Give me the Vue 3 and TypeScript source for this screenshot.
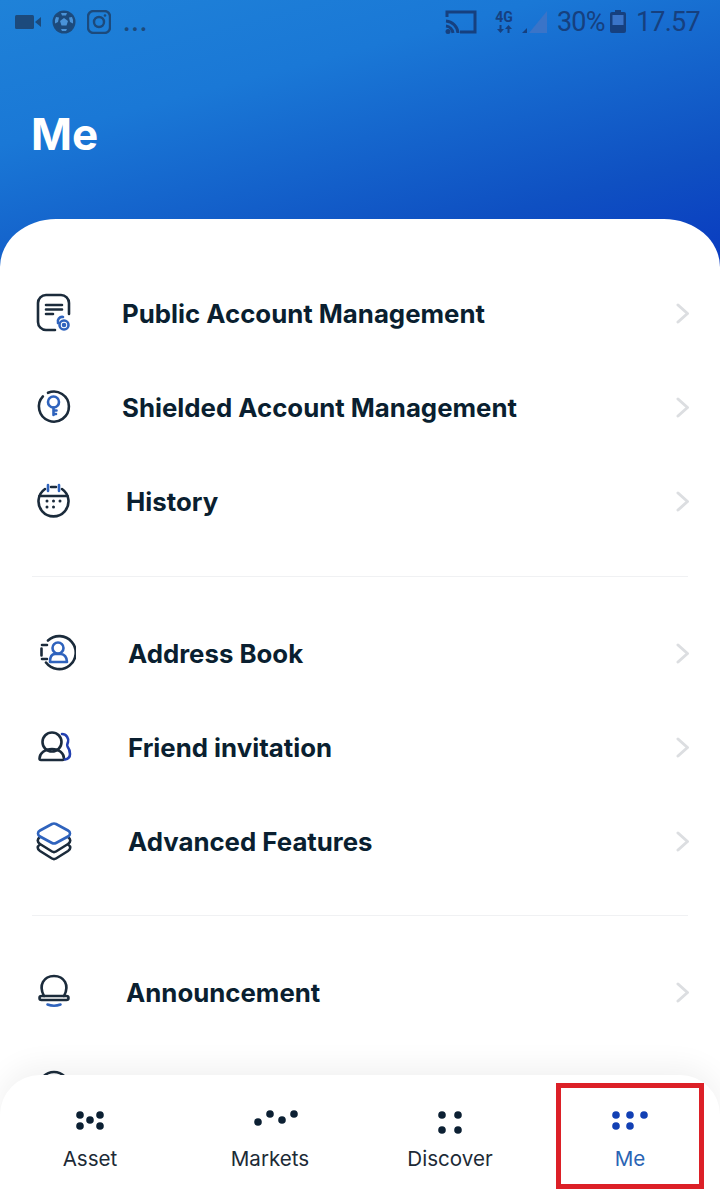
<script setup lang="ts">
interface MenuRow {
  label: string
  icon: string
  textLeft: number
}

const groups: MenuRow[][] = [
  [
    { label: 'Public Account Management', icon: 'doc', textLeft: 122 },
    { label: 'Shielded Account Management', icon: 'key', textLeft: 122 },
    { label: 'History', icon: 'calendar', textLeft: 126 },
  ],
  [
    { label: 'Address Book', icon: 'book', textLeft: 128 },
    { label: 'Friend invitation', icon: 'friends', textLeft: 128 },
    { label: 'Advanced Features', icon: 'layers', textLeft: 128 },
  ],
  [
    { label: 'Announcement', icon: 'bell', textLeft: 126 },
    { label: '', icon: 'circle', textLeft: 126 },
  ],
]

const tabs = [
  { label: 'Asset', dots: [[20, 7], [20, 18], [30, 12], [40, 7], [40, 18]] },
  { label: 'Markets', dots: [[18, 14], [30, 6], [42, 12], [54, 6]] },
  { label: 'Discover', dots: [[22, 7], [38, 7], [22, 22], [38, 22]] },
  { label: 'Me', dots: [[16, 7], [30, 7], [44, 7], [16, 18], [30, 18]], active: true },
]
</script>

<template>
  <div class="screen">
    <header class="hero">
      <div class="status">
        <div class="status-left">
          <svg width="26" height="14" viewBox="0 0 26 14"><rect x="0" y="0" width="19" height="14" rx="1.5" /><path d="M20 7l6-5v10z" /></svg>
          <svg width="24" height="24" viewBox="0 0 24 24">
            <circle cx="12" cy="12" r="11.5" />
            <path class="patch" d="M12 8l4 3-1.500 4.500h-5L8 11zM4 7l3 .5L6 12l-3 1.500A10 10 0 014 7zM20 7l-3 .5L18 12l3 1.500A10 10 0 0020 7zM9 3h6l-1 2.500h-4zM9 19h6l-1 2h-4z" />
          </svg>
          <svg width="24" height="24" viewBox="0 0 24 24" class="outline">
            <rect x="1" y="1" width="22" height="22" rx="5.500" />
            <circle cx="12" cy="12" r="5" />
            <circle class="dot" cx="18" cy="5.500" r="1.300" />
          </svg>
          <span class="more">...</span>
        </div>
        <div class="status-right">
          <svg width="32" height="26" viewBox="0 0 32 26" class="cast">
            <path d="M2 8V3h28v20H15" />
            <path d="M1 12a13 13 0 0112 12M1 17a8 8 0 017 7" />
            <circle class="dot" cx="3" cy="22.500" r="2.500" />
          </svg>
          <span class="net">4G
            <svg width="15" height="8" viewBox="0 0 15 8"><path d="M2.500 0h2v4H7L3.500 8 0 4h2.500zM10.500 8h2V4H15l-3.500-4L8 4h2.500z" /></svg>
          </span>
          <svg width="25" height="22" viewBox="0 0 25 22" class="signal">
            <path class="faint" d="M25 0v22H7z" />
            <path d="M0 22l5-5v5z" />
          </svg>
          <span class="pct">30%</span>
          <svg width="16" height="23" viewBox="0 0 16 23" class="battery">
            <path d="M5 0h6v2h3a2 2 0 012 2v17a2 2 0 01-2 2H2a2 2 0 01-2-2V4a2 2 0 012-2h3z" />
            <rect class="faint" x="2.500" y="5" width="11" height="10" />
          </svg>
          <span class="time">17.57</span>
        </div>
      </div>
      <h1 class="title">Me</h1>
    </header>

    <main class="card">
      <section v-for="(group, g) in groups" :key="g" class="group">
        <div v-for="row in group" :key="row.icon" class="row">
          <svg width="44" height="44" viewBox="0 0 44 44" class="icon">
            <template v-if="row.icon === 'doc'">
              <path d="M23 38H14a8 8 0 01-8-8V11a8 8 0 018-8h15a8 8 0 018 8v11" />
              <path d="M14 13h16M14 17.500h16M14 22h7" />
              <circle class="accent" cx="32" cy="33" r="4.500" />
              <path class="accent" d="M26 31a4.500 4.500 0 015-6" />
              <circle class="accent fill" cx="32" cy="33" r="1" />
            </template>
            <template v-else-if="row.icon === 'key'">
              <path d="M16 6.800A15 15 0 1 1 10.900 10.400" />
              <circle class="accent" cx="21.500" cy="16" r="5.500" />
              <path class="accent" d="M21.500 21.500V29M21.500 24.500h3M21.500 28h2.500" />
            </template>
            <template v-else-if="row.icon === 'calendar'">
              <path d="M13 9A15 15 0 1 0 30 9" />
              <path d="M7.500 16h28M19 7h5" />
              <path class="accent" d="M16 5v6M27 5v6" />
              <g class="dots">
                <circle cx="15" cy="21" r="1.500" /><circle cx="21.500" cy="21" r="1.500" /><circle cx="28" cy="21" r="1.500" />
                <circle cx="15" cy="27" r="1.500" /><circle cx="21.500" cy="27" r="1.500" />
              </g>
            </template>
            <template v-else-if="row.icon === 'book'">
              <path d="M16 8.500A16.500 16.500 0 1 1 14 30.500" />
              <path d="M10 13h5M10 27h5M9.500 16.500v7" />
              <circle class="accent" cx="26" cy="16" r="5.500" />
              <path class="accent" d="M18 30c0-5 2-8 5-8h6c3 0 6 3 6 8z" />
            </template>
            <template v-else-if="row.icon === 'friends'">
              <circle cx="20" cy="16" r="9.500" />
              <path d="M9 34c-1 0-1.500-.5-1.500-1.500C7.500 27 13 23 20 23s12 4 12 9.500c0 1-.5 1.500-1.500 1.500z" />
              <path class="accent deep" d="M30 8c4.500 0 7 4.500 6 8-.5 2-1.500 3-.5 4.500 1.500 2 2.500 4.500 2.500 7.500 0 3-2 5-5 5.500" />
            </template>
            <template v-else-if="row.icon === 'layers'">
              <path d="M8 17c-3 2-3 5 0 7l12 7.500c1.300.8 2.700.8 4 0L36 24c3-2 3-5 0-7" />
              <path d="M8 24.500c-3 2-3 4.500 0 6.500l12 7.500c1.300.8 2.700.8 4 0L36 31c3-2 3-4.500 0-6.500" />
              <path class="accent" d="M20 4L8 10.500c-2.700 1.500-2.700 4.500 0 6L20 23c1.300.7 2.700.7 4 0l12-6.500c2.700-1.500 2.700-4.500 0-6L24 4c-1.300-.7-2.700-.7-4 0z" />
            </template>
            <template v-else-if="row.icon === 'bell'">
              <path d="M12 25C6 14 12 5 22 5s16 9 10 20" />
              <rect x="7.500" y="25" width="29" height="4" rx="2" />
              <path class="accent" d="M15.500 33.500c4 1.500 9 1.500 13 0" />
            </template>
            <template v-else>
              <circle cx="22" cy="22" r="15" />
            </template>
          </svg>
          <span class="row-label" :style="{ marginLeft: row.textLeft - 76 + 'px' }">{{ row.label }}</span>
          <svg class="chevron" width="14" height="21" viewBox="0 0 14 21"><path d="M2 2l9.500 8.500L2 19" /></svg>
        </div>
      </section>
    </main>

    <nav class="tabbar">
      <div v-for="tab in tabs" :key="tab.label" class="tab" :class="{ active: tab.active }">
        <svg width="60" height="26" class="tab-dots">
          <circle v-for="(d, i) in tab.dots" :key="i" :cx="d[0]" :cy="d[1]" r="3.800" />
        </svg>
        <span>{{ tab.label }}</span>
      </div>
    </nav>
    <div class="highlight"></div>
  </div>
</template>

<style>
body {
  margin: 0;
  background: #fff;
}
</style>

<style scoped>
.screen {
  position: relative;
  width: 720px;
  height: 1200px;
  overflow: hidden;
  background: #fff;
  font-family: Inter, "Liberation Sans", sans-serif;
  color: #0c2033;
}

.hero {
  height: 290px;
  box-sizing: border-box;
  background: linear-gradient(165deg, #1f82d8 0%, #1a78d6 30%, #0f50c2 72%, #0836c0 100%);
}

.status {
  display: flex;
  justify-content: space-between;
  align-items: center;
  height: 43px;
  padding: 0 21px 0 15px;
  color: #1c4a7c;
}

.status svg {
  fill: currentColor;
}

.status-left,
.status-right {
  display: flex;
  align-items: center;
}

.status-left {
  gap: 11px;
}

.patch {
  fill: #4a93d8;
}

.status svg.outline {
  fill: none;
  stroke: currentColor;
  stroke-width: 2.400;
}

.dot {
  fill: currentColor;
  stroke: none;
}

.more {
  font-size: 22px;
  letter-spacing: 1px;
  font-weight: 700;
  margin-left: 1px;
  padding-top: 2px;
}

.status-right {
  font-family: Roboto, sans-serif;
  color: #16407f;
}

.status svg.cast {
  fill: none;
  stroke: currentColor;
  stroke-width: 3;
  margin-right: 18px;
}

.net {
  display: flex;
  flex-direction: column;
  align-items: center;
  width: 18px;
  font-size: 14px;
  line-height: 15px;
  font-weight: 700;
  margin-right: 9px;
}

.faint {
  fill: #3a74c8;
}

.pct,
.time {
  font-size: 27px;
  line-height: 34px;
  letter-spacing: -0.8px;
  white-space: nowrap;
}

.pct {
  width: 47px;
  margin: 0 6px 0 10px;
}

.time {
  width: 63px;
  margin-left: 10px;
}

.title {
  margin: 61px 0 0 31px;
  font-size: 44px;
  line-height: 60px;
  font-weight: 700;
  color: #fff;
}

.card {
  position: relative;
  margin-top: -71px;
  height: 981px;
  box-sizing: border-box;
  padding: 48px 32px 0;
  background: #fff;
  border-radius: 56px 56px 0 0 / 48px 48px 0 0;
}

.group + .group {
  margin-top: 27px;
  padding-top: 30px;
  border-top: 1px solid #f0f1f3;
}

.group:last-child {
  margin-top: 26px;
}

.row {
  height: 94px;
  display: flex;
  align-items: center;
}

.icon {
  flex: none;
  fill: none;
  stroke: #1b2b3b;
  stroke-width: 2.600;
  stroke-linecap: round;
  stroke-linejoin: round;
}

.accent {
  stroke: #2f63bd;
}

.deep {
  stroke: #2340b0;
}

.fill {
  fill: #2f63bd;
}

.dots {
  fill: #1b2b3b;
  stroke: none;
}

.row-label {
  margin-top: -2px;
  font-size: 25.800px;
  font-weight: 700;
  color: #0a1f30;
  white-space: nowrap;
}

.chevron {
  margin: -2px -2px 0 auto;
  fill: none;
  stroke: #dcdee1;
  stroke-width: 3;
  stroke-linecap: round;
  stroke-linejoin: round;
}

.tabbar {
  position: absolute;
  left: 0;
  right: 0;
  bottom: 0;
  height: 125px;
  display: grid;
  grid-template-columns: repeat(4, 180px);
  background: #fff;
  border-radius: 40px 40px 0 0;
  box-shadow: 0 -8px 30px rgba(0, 0, 0, 0.06);
}

.tab {
  display: flex;
  flex-direction: column;
  align-items: center;
  padding-top: 33px;
  font-size: 20.600px;
  line-height: 26px;
  color: #1c2a36;
}

.tab span {
  margin-top: 12px;
}

.tab-dots {
  fill: #0c2033;
}

.tab.active {
  color: #2a64b4;
}

.tab.active .tab-dots {
  fill: #1240b4;
}

.highlight {
  position: absolute;
  left: 556px;
  top: 1083px;
  width: 148px;
  height: 106px;
  box-sizing: border-box;
  border: 5px solid #dc2027;
}
</style>
